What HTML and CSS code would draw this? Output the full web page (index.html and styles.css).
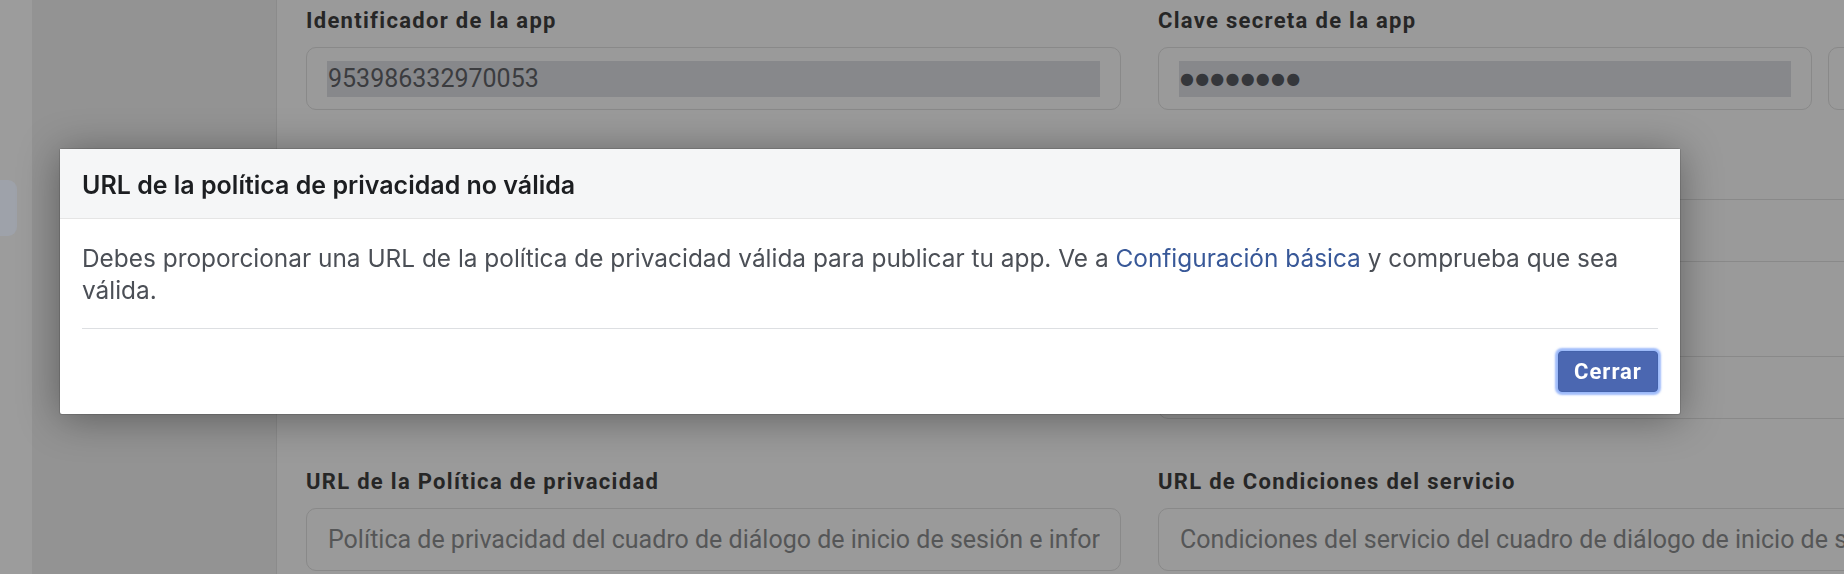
FILE: index.html
```html
<!DOCTYPE html>
<html lang="es">
<head>
<meta charset="utf-8">
<title>Configuración básica</title>
<link rel="stylesheet" href="styles.css">
</head>
<body>
<div class="app">
  <aside class="rail">
    <div class="rail-item"></div>
  </aside>
  <nav class="sidebar"></nav>
  <main class="main">
    <div class="grid">
      <div class="field">
        <div class="label">Identificador de la app</div>
        <div class="input"><span class="value selected">953986332970053</span></div>
      </div>
      <div class="field">
        <div class="label">Clave secreta de la app</div>
        <div class="input-row">
          <div class="input grow"><span class="value selected dots">●●●●●●●●</span></div>
          <div class="input show-btn"></div>
        </div>
      </div>

      <div class="field">
        <div class="input hidden-top"></div>
      </div>
      <div class="field">
        <div class="input hidden-top"></div>
      </div>

      <div class="field row3"></div>
      <div class="field row3">
        <div class="input hidden-top"></div>
      </div>

      <div class="field">
        <div class="label">URL de la Política de privacidad</div>
        <div class="input"><span class="value placeholder">Política de privacidad del cuadro de diálogo de inicio de sesión e información de la app</span></div>
      </div>
      <div class="field">
        <div class="label">URL de Condiciones del servicio</div>
        <div class="input"><span class="value placeholder">Condiciones del servicio del cuadro de diálogo de inicio de sesión e información de la app</span></div>
      </div>
    </div>
  </main>
</div>

<div class="modal" role="dialog">
  <div class="modal-header">
    <h2 class="modal-title">URL de la política de privacidad no válida</h2>
  </div>
  <div class="modal-body">
    <p class="modal-text">Debes proporcionar una URL de la política de privacidad válida para publicar tu app. Ve a <a class="link" href="#">Configuración básica</a> y comprueba que sea válida.</p>
    <div class="modal-footer">
      <button class="btn-primary" type="button">Cerrar</button>
    </div>
  </div>
</div>
</body>
</html>
```
FILE: styles.css
```css
* { box-sizing: border-box; }

html, body {
  margin: 0;
  padding: 0;
  width: 1844px;
  height: 574px;
  overflow: hidden;
  background: #9a9a9a;
}

.app {
  display: flex;
  height: 574px;
}

.rail {
  width: 32px;
  flex: none;
  background: #9c9c9c;
  padding-top: 180px;
}

.rail-item {
  width: 17px;
  height: 56px;
  background: #9ea2aa;
  border-radius: 0 9px 9px 0;
}

.sidebar {
  width: 245px;
  flex: none;
  background: #939393;
  border-right: 1px solid #8b8b8b;
}

.main {
  flex: 1;
  padding: 6px 0 0 29px;
  overflow: hidden;
}

.grid {
  display: grid;
  grid-template-columns: 815px 815px;
  column-gap: 37px;
  row-gap: 48px;
}

.row3 { margin-top: 5px; }

.hidden-top { margin-top: 41px; }

.label {
  font-family: Roboto, "Liberation Sans", sans-serif;
  font-weight: 700;
  font-size: 22px;
  letter-spacing: 1.3px;
  line-height: 30px;
  color: #262626;
  margin-bottom: 11px;
}

.input-row {
  display: flex;
  gap: 16px;
}

.grow { flex: 1; }

.show-btn {
  width: 145px;
  flex: none;
}

.input {
  height: 63px;
  border: 1px solid #898989;
  border-radius: 10px;
  padding: 13px 20px 12px 20px;
  display: flex;
  overflow: hidden;
}

.value {
  display: block;
  flex: 1;
  height: 36px;
  line-height: 36px;
  font-family: Roboto, "Liberation Sans", sans-serif;
  font-size: 25px;
  color: #3b3c3f;
  white-space: nowrap;
  overflow: hidden;
  padding-left: 1px;
}

.selected { background: #87888b; }

.dots {
  font-family: "DejaVu Sans", sans-serif;
  font-size: 16px;
  letter-spacing: 1.2px;
  color: #35373b;
}

.placeholder { color: #555657; }

/* Modal */
.modal {
  position: fixed;
  left: 60px;
  top: 149px;
  width: 1620px;
  background: #fff;
  border-radius: 2px;
  box-shadow: 0 0 0 1px rgba(0, 0, 0, 0.12), 0 4px 40px rgba(0, 0, 0, 0.38);
  font-family: Inter, "Noto Sans", sans-serif;
}

.modal-header {
  height: 70px;
  background: #f5f6f7;
  border-bottom: 1px solid #e5e5e5;
  padding: 2px 22px 0;
  display: flex;
  align-items: center;
}

.modal-title {
  margin: 0;
  font-size: 25px;
  font-weight: 600;
  color: #1c1e21;
}

.modal-body {
  padding: 23px 22px 0;
}

.modal-text {
  margin: 0;
  font-size: 24.4px;
  line-height: 32px;
  color: #4b4f56;
}

.link {
  color: #385898;
  text-decoration: none;
}

.modal-footer {
  margin-top: 22px;
  border-top: 1px solid #dddfe2;
  padding: 22px 0;
  display: flex;
  justify-content: flex-end;
}

.btn-primary {
  width: 100px;
  height: 41px;
  border: 1px solid #4462ab;
  border-radius: 4px;
  background: #4b67b1;
  color: #fff;
  font-family: Roboto, "Liberation Sans", sans-serif;
  font-weight: 700;
  font-size: 22px;
  letter-spacing: 1px;
  padding: 0;
  box-shadow: 0 0 0 1px #9dbaf9, 0 0 2px 3px rgba(120, 160, 248, 0.7);
}
```
